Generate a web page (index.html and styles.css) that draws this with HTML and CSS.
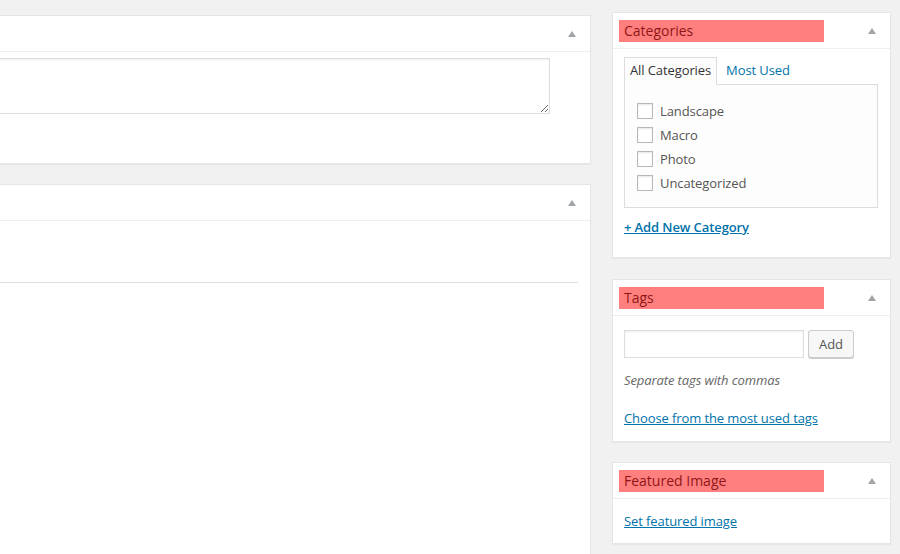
FILE: index.html
```html
<!DOCTYPE html>
<html>
<head>
<meta charset="utf-8">
<link rel="stylesheet" href="styles.css">
</head>
<body>
<div class="layout">
  <div class="main">
    <div class="postbox excerpt">
      <div class="hndle"><span></span><i class="toggle"></i></div>
      <div class="inside">
        <textarea class="excerpt-text"></textarea>
      </div>
    </div>
    <div class="postbox custom">
      <div class="hndle"><span></span><i class="toggle"></i></div>
      <div class="inside">
        <div class="rule"></div>
      </div>
    </div>
  </div>
  <div class="side">
    <div class="postbox cats">
      <div class="hndle"><span class="mark">Categories</span><i class="toggle"></i></div>
      <div class="inside">
        <ul class="tabs">
          <li class="tab active">All Categories</li>
          <li class="tab"><a href="#">Most Used</a></li>
        </ul>
        <div class="tabpanel">
          <ul class="checklist">
            <li><span class="cb"></span>Landscape</li>
            <li><span class="cb"></span>Macro</li>
            <li><span class="cb"></span>Photo</li>
            <li><span class="cb"></span>Uncategorized</li>
          </ul>
        </div>
        <a class="add-new" href="#">+ Add New Category</a>
      </div>
    </div>
    <div class="postbox tags">
      <div class="hndle"><span class="mark">Tags</span><i class="toggle"></i></div>
      <div class="inside">
        <div class="tag-row">
          <input class="tag-input" type="text">
          <button class="btn">Add</button>
        </div>
        <p class="howto">Separate tags with commas</p>
        <a class="link" href="#">Choose from the most used tags</a>
      </div>
    </div>
    <div class="postbox featured">
      <div class="hndle"><span class="mark">Featured Image</span><i class="toggle"></i></div>
      <div class="inside">
        <a class="link" href="#">Set featured image</a>
      </div>
    </div>
  </div>
</div>
</body>
</html>
```
FILE: styles.css
```css
html, body {
  margin: 0;
  padding: 0;
  height: 554px;
  overflow: hidden;
}
body {
  background: #f1f1f1;
  font-family: "Open Sans", "Liberation Sans", sans-serif;
  font-size: 13px;
  line-height: 19px;
  color: #444;
  letter-spacing: -0.1px;
}
.layout {
  display: grid;
  grid-template-columns: 611px 279px;
  column-gap: 21px;
  margin-left: -20px;
  align-items: start;
}
.main {
  padding-top: 15px;
}
.side {
  padding-top: 12px;
}
.postbox {
  background: #fff;
  border: 1px solid #e5e5e5;
  box-shadow: 0 1px 1px rgba(0, 0, 0, 0.04);
  box-sizing: border-box;
}
.hndle {
  height: 35px;
  border-bottom: 1px solid #eee;
  display: flex;
  align-items: center;
  justify-content: space-between;
  padding: 0 14px 0 6px;
}
.toggle {
  display: block;
  width: 0;
  height: 0;
  border-left: 4px solid transparent;
  border-right: 4px solid transparent;
  border-bottom: 6px solid #a0a5aa;
  margin-top: 1px;
}
.mark {
  display: block;
  width: 200px;
  height: 22px;
  line-height: 22px;
  padding-left: 5px;
  background: #ff7f7f;
  color: #8f1616;
  font-size: 14px;
  letter-spacing: 0;
}
.inside {
  padding: 0 12px 0 11px;
}

/* left column */
.excerpt {
  height: 149px;
  margin-bottom: 20px;
}
.excerpt .inside {
  padding-top: 6px;
  padding-left: 0;
}
.excerpt-text {
  display: block;
  width: 569px;
  height: 56px;
  box-sizing: border-box;
  margin: 0;
  border: 1px solid #ddd;
  box-shadow: inset 0 1px 2px rgba(0, 0, 0, 0.07);
  background: #fff;
}
.custom {
  height: 420px;
}
.custom .inside {
  padding-top: 61px;
}
.rule {
  height: 1px;
  background: #ddd;
}

/* categories */
.cats {
  margin-bottom: 21px;
}
.cats .inside {
  padding-top: 8px;
  padding-bottom: 20px;
}
.tabs {
  list-style: none;
  margin: 0;
  padding: 0;
  display: flex;
}
.tab {
  padding: 3px 5px 4px;
  border: 1px solid transparent;
  border-bottom: none;
  line-height: 19px;
}
.tab.active {
  border-color: #ddd;
  background: #fdfdfd;
  color: #333;
  margin-bottom: -1px;
  position: relative;
  z-index: 1;
}
.tab a {
  color: #0073aa;
  text-decoration: none;
  padding-left: 3px;
}
.tabpanel {
  border: 1px solid #ddd;
  background: #fdfdfd;
  padding: 14px 12px 12px;
}
.checklist {
  list-style: none;
  margin: 0;
  padding: 0;
}
.checklist li {
  display: flex;
  align-items: center;
  height: 24px;
  color: #555;
}
.cb {
  width: 16px;
  height: 16px;
  box-sizing: border-box;
  border: 1px solid #b4b9be;
  background: #fff;
  box-shadow: inset 0 1px 2px rgba(0, 0, 0, 0.1);
  margin-right: 7px;
}
.add-new {
  display: inline-block;
  margin-top: 10px;
  color: #0073aa;
  font-weight: 600;
  text-decoration: underline;
}

/* tags */
.tags {
  margin-bottom: 20px;
}
.tags .inside {
  padding-top: 14px;
  padding-bottom: 13px;
}
.tag-row {
  display: flex;
  gap: 4px;
}
.tag-input {
  width: 180px;
  height: 28px;
  box-sizing: border-box;
  border: 1px solid #ddd;
  box-shadow: inset 0 1px 2px rgba(0, 0, 0, 0.07);
  margin: 0;
  padding: 0;
}
.btn {
  width: 46px;
  height: 28px;
  box-sizing: border-box;
  border: 1px solid #ccc;
  border-radius: 3px;
  background: #f7f7f7;
  box-shadow: 0 1px 0 #ccc;
  color: #555;
  font-family: "Open Sans", "Liberation Sans", sans-serif;
  font-size: 13px;
  padding: 0;
  margin: 0;
}
.howto {
  margin: 13px 0 19px;
  font-style: italic;
  color: #666;
}
.link {
  color: #0073aa;
  text-decoration: underline;
}

/* featured */
.featured .inside {
  padding-top: 13px;
  padding-bottom: 12px;
}
```
